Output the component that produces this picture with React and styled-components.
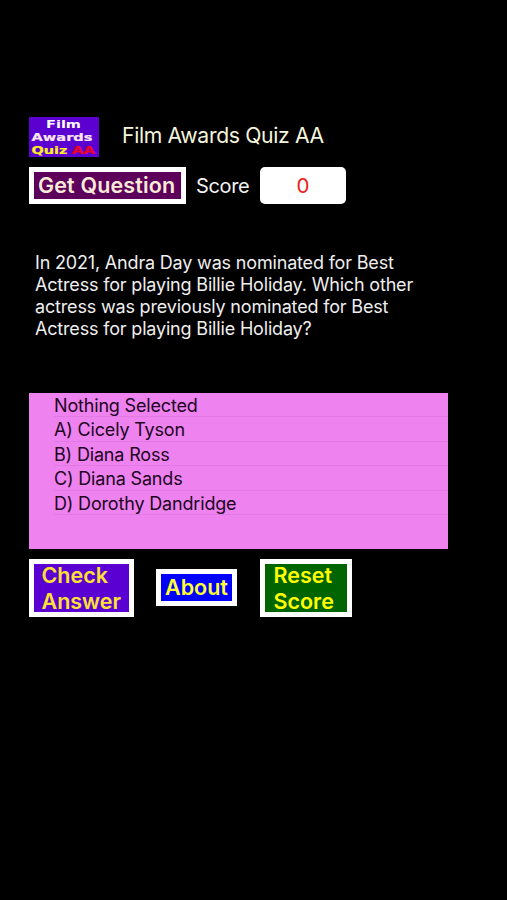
import React from "react";
import styled, { createGlobalStyle } from "styled-components";

const GlobalStyle = createGlobalStyle`
  * { box-sizing: border-box; }
  body { margin: 0; background: #000; font-family: Inter, "Liberation Sans", sans-serif; }
`;

const Screen = styled.main`
  width: 507px;
  height: 900px;
  padding: 117px 59px 0 29px;
  background: #000;
  overflow: hidden;
`;

const Header = styled.header`
  display: flex;
  height: 40px;
  gap: 23px;
`;

const Logo = styled.svg`
  display: block;
  width: 70px;
  height: 40px;
  flex: none;
`;

const Title = styled.h1`
  margin: 0;
  font-size: 21.2px;
  font-weight: 400;
  line-height: 37px;
  letter-spacing: -0.35px;
  color: #f5f5dc;
  white-space: nowrap;
`;

const ScoreBar = styled.section`
  display: flex;
  align-items: center;
  height: 37px;
  margin-top: 10px;
`;

const Button = styled.button`
  display: flex;
  align-items: center;
  flex: none;
  width: ${(p) => p.$width}px;
  height: ${(p) => p.$height}px;
  padding: ${(p) => p.$drop || 0}px 0 ${(p) => p.$lift || 0}px ${(p) => p.$inset}px;
  border: 5px solid #fff;
  background: ${(p) => p.$background};
  color: ${(p) => p.$color};
  font-family: inherit;
  font-size: 21.5px;
  font-weight: 600;
  line-height: 26px;
  letter-spacing: ${(p) => p.$tracking || 0}px;
  text-align: left;
  white-space: pre;
`;

const ScoreLabel = styled.label`
  width: 64px;
  margin-left: 10px;
  font-size: 20px;
  letter-spacing: -0.35px;
  color: #f2f2f2;
`;

const ScoreValue = styled.output`
  width: 86px;
  height: 37px;
  border-radius: 5px;
  background: #fff;
  color: #f01818;
  font-size: 20.5px;
  line-height: 38px;
  text-align: center;
`;

const Question = styled.p`
  height: 88px;
  margin: 48px 0 0 6px;
  font-size: 18px;
  line-height: 22px;
  letter-spacing: -0.175px;
  color: #eee;
  white-space: pre;
`;

const Answers = styled.ul`
  height: 156px;
  margin: 53px 0 0;
  padding: 0 0 0 25px;
  list-style: none;
  background: #ee82ee;
`;

const Answer = styled.li`
  height: 24.4px;
  border-bottom: 1px solid #e379e4;
  font-size: 18px;
  line-height: 25px;
  letter-spacing: -0.17px;
  color: #20051f;
  white-space: nowrap;
`;

const Actions = styled.footer`
  display: flex;
  align-items: center;
  height: 57px;
  margin-top: 10px;
`;

const Spacer = styled.span`
  width: ${(p) => p.$width}px;
`;

const answers = [
  "Nothing Selected",
  "A) Cicely Tyson",
  "B) Diana Ross",
  "C) Diana Sands",
  "D) Dorothy Dandridge",
];

const question = [
  "In 2021, Andra Day was nominated for Best",
  "Actress for playing Billie Holiday. Which other",
  "actress was previously nominated for Best",
  "Actress for playing Billie Holiday?",
].join("\n");

function QuizLogo() {
  return (
    <Logo viewBox="0 0 70 40" aria-label="Film Awards Quiz AA">
      <rect width="70" height="40" fill="#5b00d0" />
      <g fontFamily="DejaVu Sans" fontWeight="700" fontSize="10.8" strokeWidth="0.2">
        <text x="17" y="11.3" textLength="35" lengthAdjust="spacingAndGlyphs" fill="#fff">Film</text>
        <text x="2.5" y="24" textLength="61" lengthAdjust="spacingAndGlyphs" fill="#fbe6ee" stroke="#fbe6ee">Awards</text>
        <text x="2.5" y="36.7" textLength="36" lengthAdjust="spacingAndGlyphs" fill="#ffee20" stroke="#ffee20">Quiz</text>
        <text x="43" y="36.7" textLength="23" lengthAdjust="spacingAndGlyphs" fill="#f00028" stroke="#f00028">AA</text>
      </g>
    </Logo>
  );
}

export default function App() {
  return (
    <>
      <GlobalStyle />
      <Screen>
        <Header>
          <QuizLogo />
          <Title>Film Awards Quiz AA</Title>
        </Header>
        <ScoreBar>
          <Button $width={157} $height={37} $inset={4} $lift={1} $tracking={0.15} $background="#5c005c" $color="#faebd7">Get Question</Button>
          <ScoreLabel>Score</ScoreLabel>
          <ScoreValue>0</ScoreValue>
        </ScoreBar>
        <Question>{question}</Question>
        <Answers>
          {answers.map((text) => <Answer key={text}>{text}</Answer>)}
        </Answers>
        <Actions>
          <Button $width={105} $height={58} $inset={7.5} $drop={1} $background="#5a00d2" $color="#ffe135">{"Check\nAnswer"}</Button>
          <Spacer $width={22} />
          <Button $width={81} $height={37} $inset={4} $lift={1} $background="#0000ff" $color="#ffff32">About</Button>
          <Spacer $width={23} />
          <Button $width={92} $height={58} $inset={8.5} $drop={1} $background="#006400" $color="#ffff00">{"Reset\nScore"}</Button>
        </Actions>
      </Screen>
    </>
  );
}
